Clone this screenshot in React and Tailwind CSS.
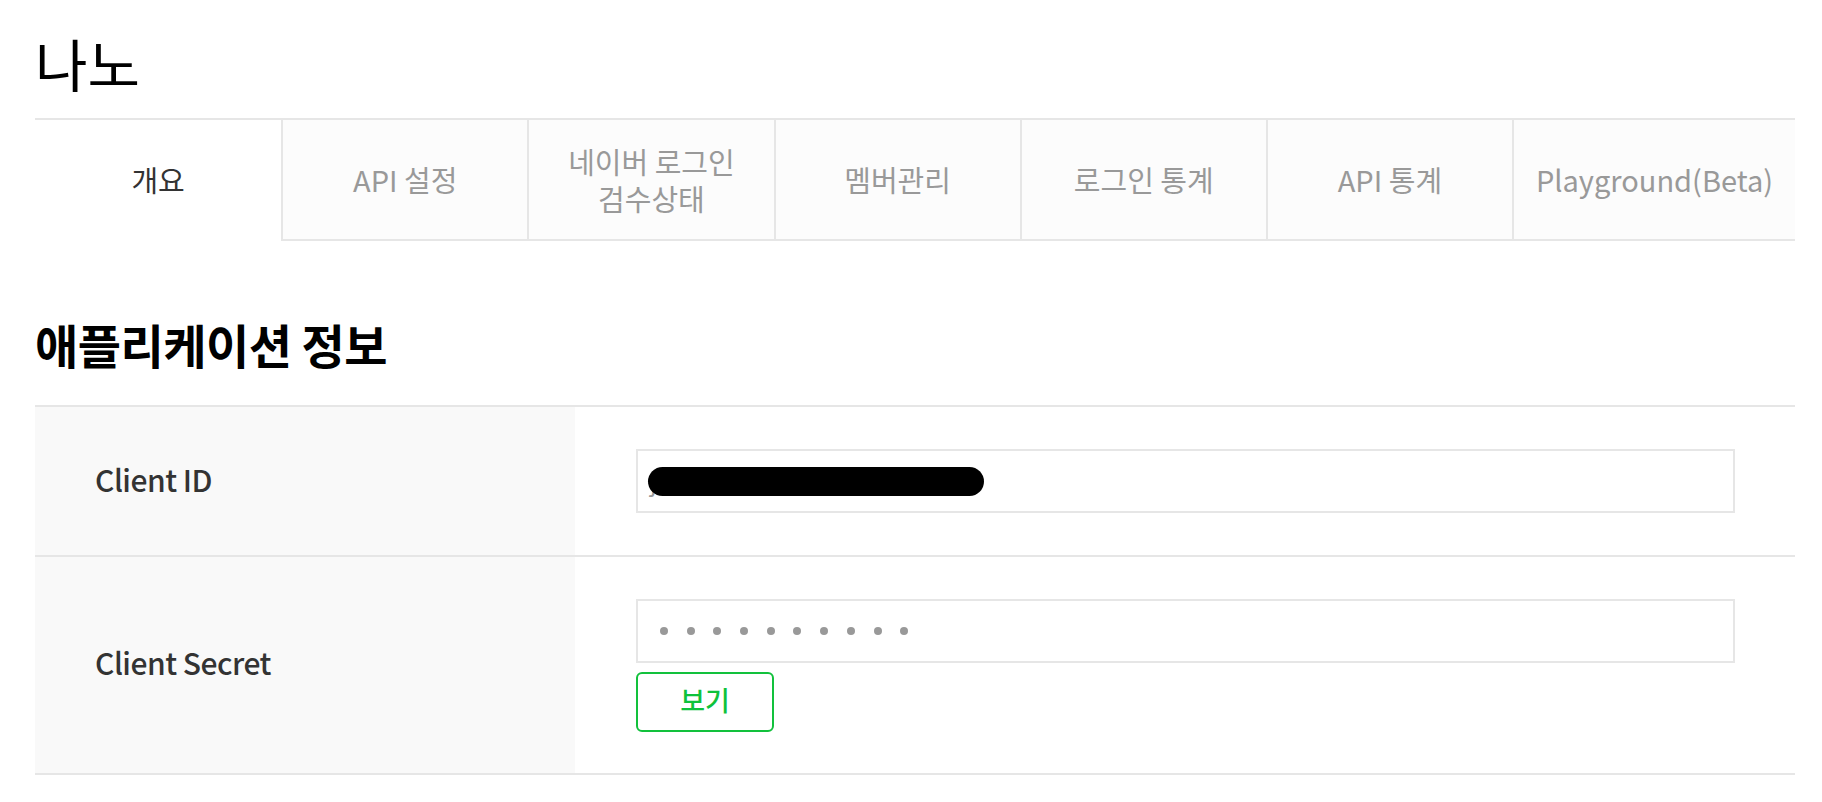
import React from "react";

const tabs = [
  { label: "개요", active: true },
  { label: "API 설정" },
  { label: ["네이버 로그인", "검수상태"] },
  { label: "멤버관리" },
  { label: "로그인 통계" },
  { label: "API 통계" },
  { label: "Playground(Beta)" },
];

export default function App() {
  return (
    <div className="min-h-[802px] bg-white font-['Noto_Sans_CJK_KR','Noto_Sans',sans-serif] pl-[35px] pr-[27px]">
      <div className="h-[118px] pt-[28px]">
        <h1 className="text-[57px] leading-[1.2] text-black font-normal">나노</h1>
      </div>

      <div className="grid grid-cols-[repeat(6,1fr)_283px] h-[123px]">
        {tabs.map((t, i) => (
          <div
            key={i}
            className={
              t.active
                ? "flex items-center justify-center border-t-2 border-[#e6e6e6] bg-white text-[29px] font-normal text-[#333] pb-[2px]"
                : "flex flex-col items-center justify-center border-t-2 border-b-2 border-l-2 border-[#e6e6e6] bg-[#fcfcfc] text-[29px] font-normal text-[#999]"
            }
          >
            {Array.isArray(t.label) ? (
              <span className="text-center leading-[37px]">
                {t.label[0]}
                <br />
                {t.label[1]}
              </span>
            ) : (
              <span>{t.label}</span>
            )}
          </div>
        ))}
      </div>

      <div className="h-[164px] flex items-end pb-[38px]">
        <h2 className="text-[47px] leading-none font-semibold text-black tracking-[-0.5px]">애플리케이션 정보</h2>
      </div>

      <div className="border-t-2 border-[#e6e6e6]">
        <div className="flex h-[150px] border-b-2 border-[#e6e6e6]">
          <div className="w-[540px] shrink-0 bg-[#f9f9f9] flex items-center pl-[60px] pb-[4px] text-[30px] font-medium text-[#333] tracking-[-0.5px]">
            Client ID
          </div>
          <div className="flex-1 flex items-center pl-[61px] pr-[60px]">
            <div className="relative w-full h-[64px] border-2 border-[#e6e6e6] flex items-center pl-[12px] text-[24px] text-[#999]">
              <span>jXXXXXXlXXXXXlXlXXXXX</span>
              <div className="absolute left-[10px] top-[16px] w-[336px] h-[29px] rounded-full bg-black"></div>
            </div>
          </div>
        </div>

        <div className="flex h-[218px] border-b-2 border-[#e6e6e6]">
          <div className="w-[540px] shrink-0 bg-[#f9f9f9] flex items-center pl-[60px] pb-[6px] text-[30px] font-medium text-[#333] tracking-[-0.5px]">
            Client Secret
          </div>
          <div className="flex-1 flex flex-col justify-center pl-[61px] pr-[60px]">
            <div className="w-full h-[64px] border-2 border-[#e6e6e6] flex items-center pl-[22px] gap-[18.7px]">
              {Array.from({ length: 10 }).map((_, i) => (
                <div key={i} className="w-[8px] h-[8px] rounded-full bg-[#999]"></div>
              ))}
            </div>
            <button className="mt-[9px] w-[138px] h-[60px] border-2 border-[#12c13c] rounded-[6px] bg-white text-[27px] font-medium text-[#0ec23b] flex items-center justify-center pb-[2px]">
              보기
            </button>
          </div>
        </div>
      </div>
    </div>
  );
}
